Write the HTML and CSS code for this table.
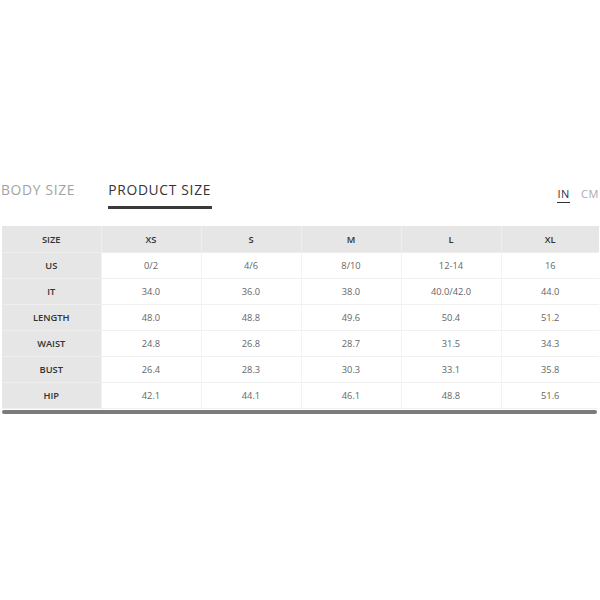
FILE: index.html
```html
<!DOCTYPE html>
<html>
<head>
<meta charset="utf-8">
<link rel="stylesheet" href="styles.css">
</head>
<body>
<div class="page">
  <div class="tabs-bar">
    <div class="tabs">
      <div class="tab">BODY SIZE</div>
      <div class="tab active">PRODUCT SIZE</div>
    </div>
    <div class="units">
      <span class="unit active">IN</span>
      <span class="unit">CM</span>
    </div>
  </div>
  <div class="table-wrap">
    <table class="chart">
      <colgroup>
        <col class="c-label"><col class="c"><col class="c"><col class="c"><col class="c"><col class="c-last">
      </colgroup>
      <thead>
        <tr><th>SIZE</th><th>XS</th><th>S</th><th>M</th><th>L</th><th>XL</th></tr>
      </thead>
      <tbody>
        <tr><th>US</th><td>0/2</td><td>4/6</td><td>8/10</td><td>12-14</td><td>16</td></tr>
        <tr><th>IT</th><td>34.0</td><td>36.0</td><td>38.0</td><td>40.0/42.0</td><td>44.0</td></tr>
        <tr><th>LENGTH</th><td>48.0</td><td>48.8</td><td>49.6</td><td>50.4</td><td>51.2</td></tr>
        <tr><th>WAIST</th><td>24.8</td><td>26.8</td><td>28.7</td><td>31.5</td><td>34.3</td></tr>
        <tr><th>BUST</th><td>26.4</td><td>28.3</td><td>30.3</td><td>33.1</td><td>35.8</td></tr>
        <tr><th>HIP</th><td>42.1</td><td>44.1</td><td>46.1</td><td>48.8</td><td>51.6</td></tr>
      </tbody>
    </table>
    <div class="scrollbar"></div>
  </div>
</div>
</body>
</html>
```
FILE: styles.css
```css
html, body {
  margin: 0;
  padding: 0;
  background: #fff;
}
.page {
  width: 600px;
  padding-top: 181px;
  font-family: "Open Sans", "Liberation Sans", sans-serif;
}
.tabs-bar {
  display: flex;
  justify-content: space-between;
  align-items: flex-start;
  height: 45px;
}
.tabs {
  display: flex;
  gap: 33px;
}
.tab {
  font-size: 13.8px;
  letter-spacing: 0.7px;
  color: #a3a3a3;
  line-height: 18px;
  padding: 0 0 7px 1px;
}
.tab.active {
  color: #333;
  border-bottom: 3px solid #3a3a3a;
  padding: 0 1px 7px 0;
}
.units {
  display: flex;
  gap: 11px;
  padding: 6px 1px 0 0;
  font-size: 11px;
  letter-spacing: 0.6px;
  line-height: 14px;
}
.unit {
  color: #aaa;
}
.unit.active {
  color: #333;
  border-bottom: 1px solid #333;
  padding-bottom: 1px;
}
.table-wrap {
  margin-left: 2px;
  width: 597px;
}
.chart {
  width: 597px;
  border-collapse: collapse;
  table-layout: fixed;
  font-size: 9.3px;
}
.c-label { width: 99px; }
.c { width: 100px; }
.c-last { width: 98px; }
.chart th, .chart td {
  height: 25px;
  padding: 0;
  text-align: center;
  border-bottom: 1px solid #f1f1f1;
  border-left: 1px solid #f3f3f3;
}
.chart th {
  font-weight: 600;
  color: #333;
  background: #e6e6e6;
  border-bottom-color: #eeeeee;
}
.chart thead th {
  height: 26px;
  border-left-color: #eeeeee;
}
.chart tr > :first-child {
  border-left: none;
}
.chart td {
  color: #666;
  background: #fff;
}
.scrollbar {
  height: 4px;
  margin-top: 1px;
  width: 595px;
  background: #7b7b7b;
  border-radius: 2px;
}
```
